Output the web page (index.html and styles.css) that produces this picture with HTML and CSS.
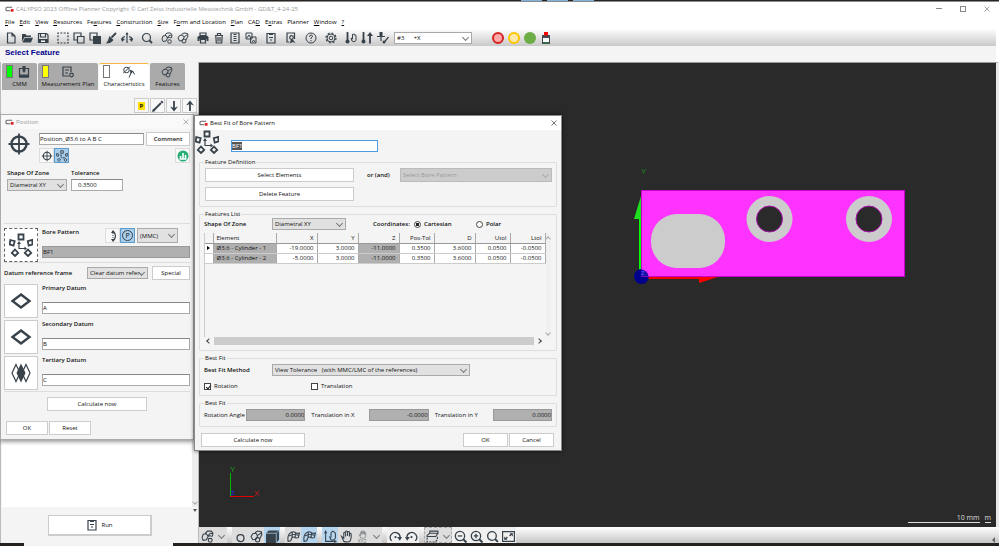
FILE: index.html
```html
<!DOCTYPE html>
<html lang="en">
<head>
    <meta charset="UTF-8">
    <meta name="viewport" content="width=device-width, initial-scale=1.0">
    <title>CALYPSO 2023 Offline Planner</title>
    <link rel="stylesheet" href="styles.css">
</head>
<body>
    <!-- Icon set -->
    <svg class="icon-defs" aria-hidden="true">
        <symbol id="i-logo" viewBox="0 0 10 6"><path d="M8 1H2.500Q1 1 1 3T2.500 5H6" fill="none" stroke="#666" stroke-width="1.200"/><path d="M6.500 3h3v3h-3z" fill="#e02020"/></symbol>
        <symbol id="i-new" viewBox="0 0 12 12"><path d="M2.500 1h4.500l3 3v7H2.500zM7 1v3h3" class="ln"/></symbol>
        <symbol id="i-open" viewBox="0 0 12 12"><path d="M1 10V2h3.500l1 1.500H10V5H3.500z" class="fl"/><path d="M3.800 5.800H12L10 10.500H1.500z" class="fl"/></symbol>
        <symbol id="i-save" viewBox="0 0 12 12"><path d="M1.500 1.500h8l1.500 1.500v7.500H1.500zM3.500 1.500v3.500h5V1.500" class="ln"/><path d="M1 7h10v4H1z" class="fl"/><path d="M4 8.500h4v1.500H4z" fill="#fff"/></symbol>
        <symbol id="i-frame" viewBox="0 0 12 12"><path d="M1 1h10v10H1z" class="ln" stroke-dasharray="2 1.330" stroke-dashoffset="1"/></symbol>
        <symbol id="i-copy" viewBox="0 0 12 12"><path d="M4 8H1V1h7v3M4.500 4.500H11V11H4.500z" class="ln"/></symbol>
        <symbol id="i-copy2" viewBox="0 0 12 12"><path d="M4 8H1V1h7v3" class="ln"/><path d="M4 4h8v8H4z" class="fl"/></symbol>
        <symbol id="i-brush" viewBox="0 0 12 12"><path d="M11 1L6.500 5.500" class="ln bold"/><path d="M4.500 4l4 4Q6 11.500 1 11.500L3 8.500z" class="fl"/></symbol>
        <symbol id="i-level" viewBox="0 0 12 12"><path d="M6 1v10M1 8Q1 5 4 4.500M11 8Q11 5 8 4.500" class="ln"/><path d="M6 0l1.500 2.500h-3zM0 6l4 1-3 3zM12 6L8 7l3 3z" class="fl"/></symbol>
        <symbol id="i-search" viewBox="0 0 12 12"><circle cx="5.500" cy="5.500" r="4" class="ln"/><path d="M8.500 8.500l2.500 2.500" class="ln bold"/></symbol>
        <symbol id="i-feat" viewBox="0 0 12 12"><path d="M1 7l1-3 3-.5 1.500 2.500L5 9 2 9.500zM4 3l2-2h3.500L11 3l-.5 3M6.500 5.500L8 3.500l2.500-.5M6.500 6q2-1.500 3.500 0" class="ln thin"/><circle cx="8.500" cy="9.500" r="1.800" class="ln thin"/></symbol>
        <symbol id="i-feat2" viewBox="0 0 12 12"><path d="M1 6l1.500-2.500 3-.5L7 5.500 5.500 8.500 2.500 9zM4.500 2.500L7 1l3.500.5L11 4 9 8M7 5l3.500-2.500" class="ln thin"/><circle cx="7" cy="9" r="2" class="ln thin"/></symbol>
        <symbol id="i-print" viewBox="0 0 12 12"><path d="M3 1h6v2.500H3z" class="ln"/><path d="M1.500 4h9l1 1v4H9.500V7h-7v2h-2V5z" class="fl"/><path d="M3.500 7.500h5v3.500h-5z" class="ln"/></symbol>
        <symbol id="i-trash" viewBox="0 0 12 12"><path d="M2 3.500h8M4.500 3V1.500h3V3M2.800 4l.5 7h5.400l.5-7M5 5v4.500M7 5v4.500" class="ln"/></symbol>
        <symbol id="i-list" viewBox="0 0 12 12"><path d="M2 1h8v10H2z" class="ln"/><path d="M4.500 2.500h3M4.500 4.500h3M4.500 6.500h3M4.500 8.500h3" class="ln"/></symbol>
        <symbol id="i-images" viewBox="0 0 12 12"><path d="M1 1h6v6H1zM5.500 5H11v6H5.500zM2 6l2-3 2 3M7 10l1.500-2 1.500 2" class="ln thin"/></symbol>
        <symbol id="i-clip" viewBox="0 0 12 12"><path d="M2 1.500h8v9.500H2zM4 5.500h4M5 8h2" class="ln"/><path d="M4 1h4v2H4z" class="fl"/></symbol>
        <symbol id="i-report" viewBox="0 0 12 12"><path d="M4 10H2V1h7.500v6" class="ln"/><circle cx="6.500" cy="5.500" r="1.800" class="ln"/><path d="M4.500 11.500l1.500-4h2l2.500 4-2.500-1.500z" class="fl"/></symbol>
        <symbol id="i-help" viewBox="0 0 12 12"><circle cx="6" cy="6" r="5" class="ln thin"/><path d="M4.500 5q0-2 1.500-2t1.500 1.300q0 .7-1.500 1.700v1M6 8v1.200" class="ln thin"/></symbol>
        <symbol id="i-gear" viewBox="0 0 12 12"><circle cx="6" cy="6" r="4" class="ln thin"/><circle cx="6" cy="6" r="5" class="ln" stroke-dasharray="2 1.900"/><circle cx="6" cy="6" r="1.800" class="ln thin"/></symbol>
        <symbol id="i-probe-hand" viewBox="0 0 12 12"><path d="M2.500 0v8" class="ln bold"/><circle cx="2.500" cy="9.500" r="2" class="fl"/><path d="M6 6l1 3q2 2 4-.5V3.500q-1-1-1 0 0-2-1.200-1.200Q7.500 1.500 7.500 3v4z" class="ln thin"/></symbol>
        <symbol id="i-probe-up" viewBox="0 0 12 12"><path d="M2.500 0v8M9 3v8.500" class="ln bold"/><circle cx="2.500" cy="9.500" r="2" class="fl"/><path d="M9 0l3 4H6z" class="fl"/></symbol>
        <symbol id="i-stylus" viewBox="0 0 12 12"><path d="M0 4.500h8M4 4v5M7 10.500L11.500 5" class="ln"/><path d="M2.500 0h3v4h-3z" class="fl"/><circle cx="7" cy="10" r="1.500" class="fl"/></symbol>
        <symbol id="i-lamp" viewBox="0 0 12 12"><path d="M2 3h8v9H2z" fill="#444b50"/><path d="M4 0h4v3.500H4z" fill="#f00"/><path d="M3 6h6v4H3z" fill="#fff"/><path d="M3 10.500h6v1H3z" fill="#2a8a4a"/></symbol>
        <symbol id="i-machine" viewBox="0 0 12 12"><path d="M1.500 2.500h9V11h-9z" class="ln"/><path d="M4.500 0h3v5L6 7 4.500 5zM1 8.500h10v3H1z" class="fl"/></symbol>
        <symbol id="i-plan" viewBox="0 0 12 12"><path d="M7 10H1V1h8v5M3 4h4M3 7h3" class="ln"/><circle cx="9.500" cy="9" r="1.800" class="ln"/></symbol>
        <symbol id="i-char" viewBox="0 0 12 12"><circle cx="3.500" cy="4" r="2.800" class="ln thin"/><path d="M0 7.500L7 .5M6 11.500l2.500-5.500M7 4.500q4 0 4.500 4" class="ln thin"/><path d="M7 4l3.500 1.500L7.500 8z" class="fl"/></symbol>
        <symbol id="i-pencil" viewBox="0 0 12 12"><path d="M2 10L9 3" class="ln bold"/><path d="M9.200 1.200l1.600 1.600" class="ln bold"/><path d="M0 12l1-3.500L3.500 11z" class="fl"/></symbol>
        <symbol id="i-down" viewBox="0 0 12 12"><path d="M6 1v8" class="ln bold"/><path d="M2 6.500l4 5 4-5-4 1.500z" class="fl"/></symbol>
        <symbol id="i-up" viewBox="0 0 12 12"><path d="M6 11V3" class="ln bold"/><path d="M2 5.500l4-5 4 5L6 4z" class="fl"/></symbol>
        <symbol id="i-target" viewBox="0 0 24 24"><circle cx="12" cy="12" r="7.500" class="ln heavy"/><path d="M12 1.500v21M1.500 12h21" class="ln bold"/></symbol>
        <symbol id="i-pattern" viewBox="0 0 24 24"><path d="M9.500 1.500h5v5h-5zM1.300 7l4.400 1.200-1.200 4.400L.6 11.400zM18.800 8.200L23.200 7l.4 4.400-3.900 1.200zM6 16.500L9.200 20 6 23 2.800 20zM19 16.500l3.200 3.500-3.200 3-3.200-3z" class="ln bold"/><path d="M10 10v5.500h6" class="ln"/><path d="M10 8l2 3H8zM18 15.500L15.500 13.500v4z" class="fl"/></symbol>
        <symbol id="i-chart" viewBox="0 0 12 12"><circle cx="6" cy="6" r="5.500" fill="#27ae74"/><path d="M2.500 9h7M3.500 8.500V6M6 8.500V3M8.500 8.500V5" stroke="#fff" stroke-width="1.600" fill="none"/></symbol>
        <symbol id="i-env" viewBox="0 0 12 12"><path d="M6 1q5 5 0 10" class="ln"/><path d="M6 0L4 3h4zM6 12L4 9h4z" class="fl"/><path d="M6 3v6" class="ln thin" stroke-dasharray="1 1"/></symbol>
        <symbol id="i-plane" viewBox="0 0 24 24"><path d="M12 5.500l8.500 6.500-8.500 6.500L3.500 12z" class="ln heavy"/></symbol>
        <symbol id="i-sym" viewBox="0 0 24 24"><path d="M7 3.500l4 8.500-4 8.500L3 12zM17 3.500l4 8.500-4 8.500-4-8.500z" class="ln"/><path d="M12 2.500l4.500 9.500-4.500 9.500L7.500 12z" class="fl"/></symbol>
        <symbol id="i-ring" viewBox="0 0 12 12"><circle cx="6" cy="7.500" r="3.200" class="ln"/></symbol>
        <symbol id="i-cube" viewBox="0 0 12 12"><path d="M0 3l2.500-2.500H12V9l-2.500 3H0z" class="fl"/><path d="M0 3h9.500v9M9.500 3L12 .5" fill="none" stroke="#a9cbe4" stroke-width=".7"/></symbol>
        <symbol id="i-surf" viewBox="0 0 12 12"><path d="M1 10.500Q0 4 4 2q2-1 4 .5 1.500 1 3.500.3L10.500 7Q8 8 6.500 6.500 4.500 6 3.500 10zM2 5.500q4-2.500 9-.5M5 2l-.5 5M8 2.500L7.500 7" class="ln thin"/></symbol>
        <symbol id="i-axhand" viewBox="0 0 12 12"><path d="M1.500 2v8.500H10M5 6l1.500 3q3 1 4-1.500V3L9.500 2 8 1 6.500 2.500V7" class="ln thin"/><path d="M1.500 0L3 3H0zM12 10.500L9.500 9v3z" class="fl"/></symbol>
        <symbol id="i-hand" viewBox="0 0 12 12"><path d="M1.500 6l2 4.500q4 1.500 6-.5l.8-3V3.500Q9.500 2.500 8.800 3.500V6 2Q8 .8 7 2v3.500V1.500Q6 .4 5.200 1.500V6 2.500Q4.200 1.500 3.500 2.500v5z" class="ln thin"/></symbol>
        <symbol id="i-rotr" viewBox="0 0 12 12"><path d="M2.500 10A4.500 4.500 0 1 1 10 8" class="ln"/><path d="M7.500 6.500H12L10 10z" class="fl"/><circle cx="6" cy="6.500" r="1" class="fl"/></symbol>
        <symbol id="i-rotl" viewBox="0 0 12 12"><path d="M9.500 10A4.500 4.500 0 1 0 2 8" class="ln"/><path d="M4.500 6.500H0L2 10z" class="fl"/><circle cx="6" cy="6.500" r="1" class="fl"/></symbol>
        <symbol id="i-section" viewBox="0 0 12 12"><path d="M1 5l2.500-2H11L9 6H1zM3.500 3V1H11v2" class="ln thin"/><path d="M1 7v4h7.500l2-2V6" class="ln thin" stroke-dasharray="2 1"/></symbol>
        <symbol id="i-zout" viewBox="0 0 12 12"><circle cx="5.500" cy="5.500" r="4.300" class="ln"/><path d="M8.500 8.500l3 3" class="ln bold"/><path d="M3.500 5.500h4" class="ln"/></symbol>
        <symbol id="i-zin" viewBox="0 0 12 12"><circle cx="5.500" cy="5.500" r="4.300" class="ln"/><path d="M8.500 8.500l3 3" class="ln bold"/><path d="M3.500 5.500h4M5.500 3.500v4" class="ln"/></symbol>
        <symbol id="i-fit" viewBox="0 0 12 12"><path d="M.5 1.500h11v9H.5zM3 8.500L5 6.500M9 3.500L7 5.500" class="ln"/><path d="M2 6l3 3H2zM10 6L7 3h3z" class="fl"/></symbol>
        <symbol id="i-x" viewBox="0 0 12 12"><path d="M1 1l10 10M11 1L1 11" fill="none" stroke="currentColor" stroke-width="1.500"/></symbol>
    </svg>

    <div class="desktop-edge"><span></span><span></span><span></span></div>

    <header>
        <div class="app-title">
            <svg class="logo"><use href="#i-logo"/></svg>
            <h1>CALYPSO 2023 Offline Planner Copyright © Carl Zeiss Industrielle Messtechnik GmbH - GD&amp;T_4-24-25</h1>
            <div class="window-controls">
                <button type="button" aria-label="Minimize"><span class="min"></span></button>
                <button type="button" aria-label="Maximize"><span class="max"></span></button>
                <button type="button" aria-label="Close"><svg><use href="#i-x"/></svg></button>
            </div>
        </div>

        <nav class="menu">
            <a href="#"><u>F</u>ile</a>
            <a href="#"><u>E</u>dit</a>
            <a href="#"><u>V</u>iew</a>
            <a href="#"><u>R</u>esources</a>
            <a href="#">Fe<u>a</u>tures</a>
            <a href="#"><u>C</u>onstruction</a>
            <a href="#"><u>S</u>ize</a>
            <a href="#">F<u>o</u>rm and Location</a>
            <a href="#"><u>P</u>lan</a>
            <a href="#">CA<u>D</u></a>
            <a href="#">E<u>x</u>tras</a>
            <a href="#">Planner</a>
            <a href="#"><u>W</u>indow</a>
            <a href="#"><u>?</u></a>
        </nav>

        <div class="toolbar">
            <div class="tools">
                <button type="button" aria-label="New"><svg><use href="#i-new"/></svg></button>
                <button type="button" aria-label="Open"><svg><use href="#i-open"/></svg></button>
                <button type="button" aria-label="Save"><svg><use href="#i-save"/></svg></button>
            </div>
            <div class="tools">
                <button type="button" aria-label="Select"><svg><use href="#i-frame"/></svg></button>
                <button type="button" aria-label="Copy"><svg><use href="#i-copy"/></svg></button>
                <button type="button" aria-label="Paste"><svg><use href="#i-copy2"/></svg></button>
                <button type="button" aria-label="Format"><svg><use href="#i-brush"/></svg></button>
                <button type="button" aria-label="Alignment"><svg><use href="#i-level"/></svg></button>
            </div>
            <div class="tools">
                <button type="button" aria-label="Search"><svg><use href="#i-search"/></svg></button>
            </div>
            <div class="tools">
                <button type="button" aria-label="Feature"><svg><use href="#i-feat"/></svg></button>
                <button type="button" aria-label="Feature edit"><svg><use href="#i-feat2"/></svg></button>
            </div>
            <div class="tools">
                <button type="button" aria-label="Print"><svg><use href="#i-print"/></svg></button>
                <button type="button" aria-label="Delete"><svg><use href="#i-trash"/></svg></button>
                <button type="button" aria-label="List"><svg><use href="#i-list"/></svg></button>
                <button type="button" aria-label="Plots"><svg><use href="#i-images"/></svg></button>
            </div>
            <div class="tools">
                <button type="button" aria-label="Protocol"><svg><use href="#i-clip"/></svg></button>
            </div>
            <div class="tools">
                <button type="button" aria-label="Report"><svg><use href="#i-report"/></svg></button>
            </div>
            <div class="tools">
                <button type="button" aria-label="Help"><svg><use href="#i-help"/></svg></button>
            </div>
            <div class="tools">
                <button type="button" aria-label="Settings"><svg><use href="#i-gear"/></svg></button>
            </div>
            <div class="tools">
                <button type="button" aria-label="Manual probe"><svg><use href="#i-probe-hand"/></svg></button>
                <button type="button" aria-label="Raise probe"><svg><use href="#i-probe-up"/></svg></button>
                <button type="button" aria-label="Stylus"><svg><use href="#i-stylus"/></svg></button>
            </div>
            <span class="select-box probe-select">
                <select aria-label="Probe"><option>#3 &nbsp; &nbsp; &nbsp;+X</option></select>
            </span>
            <div class="tools lights">
                <button type="button" class="light red" aria-label="Stop"></button>
                <button type="button" class="light yellow" aria-label="Pause"></button>
                <button type="button" class="light green" aria-label="Go"></button>
                <button type="button" aria-label="Status lamp"><svg><use href="#i-lamp"/></svg></button>
            </div>
        </div>

        <h2 class="prompt">Select Feature</h2>
    </header>

    <main>
        <section class="sidebar">
            <div class="tabs">
                <button type="button"><span class="tab-icons"><i class="flag on"></i><svg><use href="#i-machine"/></svg></span>CMM</button>
                <button type="button"><span class="tab-icons plan"><i class="flag wait"></i><svg><use href="#i-plan"/></svg></span>Measurement Plan</button>
                <button type="button" class="active"><span class="tab-icons"><i class="flag"></i><svg><use href="#i-char"/></svg></span>Characteristics</button>
                <button type="button"><span class="tab-icons single"><svg><use href="#i-feat2"/></svg></span>Features</button>
            </div>
            <div class="list-tools">
                <button type="button"><b>P</b></button>
                <button type="button" aria-label="Edit"><svg><use href="#i-pencil"/></svg></button>
                <button type="button" aria-label="Move down"><svg><use href="#i-down"/></svg></button>
                <button type="button" aria-label="Move up"><svg><use href="#i-up"/></svg></button>
            </div>
            <div class="char-list"><div class="list-scroll"><i class="arrow down"></i></div></div>
            <div class="run-bar">
                <button type="button" class="run"><svg><use href="#i-clip"/></svg>Run</button>
                <span class="more"></span>
            </div>
        </section>

        <section class="workspace">
            <div class="viewport">
                <svg viewBox="0 1 797 464" preserveAspectRatio="xMinYMin meet">
                    <path d="M440 151h3v60h-3z" fill="#0f0"/>
                    <path d="M442 134l-7 23h8z" fill="#1fe01f"/>
                    <path d="M448 214h60v3h-60z" fill="#e00"/>
                    <path d="M500 214h22l-22 7z" fill="#f00"/>
                    <circle cx="442.500" cy="214.500" r="7.500" fill="#00008c"/>
                    <rect x="442.500" y="128.500" width="263" height="86" fill="#ff33ff" stroke="#c800c8"/>
                    <path d="M442 207.500a7.500 7.500 0 0 1 7.500 7h-7.500z" fill="#1c10a8"/>
                    <rect x="452" y="152" width="74" height="54" rx="26" fill="#ccc"/>
                    <g fill="#2a2a2a" stroke="#b010b0">
                        <circle cx="570.500" cy="157" r="23" fill="#ccc" stroke="none"/>
                        <circle cx="570.500" cy="157" r="13"/>
                        <circle cx="670" cy="157" r="23" fill="#ccc" stroke="none"/>
                        <circle cx="670" cy="157" r="13"/>
                    </g>
                    <text x="442" y="112" fill="#1c8a1c">Y</text>
                    <text x="442" y="213" class="tiny" fill="#55f">Z</text>

                    <path d="M31.500 411v23" stroke="#00b400"/>
                    <path d="M31 434.500h24" stroke="#e00000"/>
                    <text x="31" y="410" fill="#1a9a1a">Y</text>
                    <text x="55" y="434" fill="#c01818">X</text>
                    <text x="32" y="433" class="tiny" fill="#22f">Z</text>
                </svg>
                <div class="scale"><span>10 mm</span><span>m</span></div>
            </div>

            <div class="view-tools">
                <div class="group">
                    <button type="button" aria-label="Features"><svg><use href="#i-feat"/></svg></button>
                    <button type="button" class="drop" aria-label="More features"></button>
                </div>
                <div class="group">
                    <button type="button" aria-label="Points"><svg><use href="#i-ring"/></svg></button>
                    <button type="button" aria-label="Solids"><svg><use href="#i-feat2"/></svg></button>
                    <button type="button" class="on" aria-label="Shaded"><svg><use href="#i-cube"/></svg></button>
                </div>
                <div class="group">
                    <button type="button" aria-label="Surface"><svg><use href="#i-surf"/></svg></button>
                    <button type="button" class="on" aria-label="Patch"><svg><use href="#i-surf"/></svg></button>
                </div>
                <div class="group">
                    <button type="button" class="on" aria-label="Move axes"><svg><use href="#i-axhand"/></svg></button>
                    <button type="button" aria-label="Pan"><svg><use href="#i-hand"/></svg></button>
                    <button type="button" class="xyz"><svg><use href="#i-hand"/></svg>XYZ</button>
                    <button type="button" class="drop" aria-label="More views"></button>
                </div>
                <div class="group light-group">
                    <button type="button" aria-label="Rotate right"><svg><use href="#i-rotr"/></svg></button>
                    <button type="button" aria-label="Rotate left"><svg><use href="#i-rotl"/></svg></button>
                </div>
                <div class="group dim">
                    <button type="button" aria-label="Section"><svg><use href="#i-section"/></svg></button>
                    <button type="button" class="drop" aria-label="More sections"></button>
                </div>
                <div class="group light-group last">
                    <button type="button" aria-label="Zoom out"><svg><use href="#i-zout"/></svg></button>
                    <button type="button" aria-label="Zoom in"><svg><use href="#i-zin"/></svg></button>
                    <button type="button" aria-label="Zoom"><svg><use href="#i-search"/></svg></button>
                    <button type="button" aria-label="Fit"><svg><use href="#i-fit"/></svg></button>
                </div>
                <span class="collapse"></span>
            </div>
        </section>
    </main>

    <div class="desktop-bottom"><span></span></div>

    <!-- Position window -->
    <form class="window position">
        <div class="window-title">
            <svg class="logo"><use href="#i-logo"/></svg>
            <h3>Position</h3>
            <button type="button" class="close" aria-label="Close"><svg><use href="#i-x"/></svg></button>
        </div>
        <div class="pos-head">
            <svg class="big-icon"><use href="#i-target"/></svg>
            <div class="pos-fields">
                <div class="row">
                    <input type="text" class="grow" aria-label="Name" value="Position_Ø3.6 to A B C">
                    <button type="button" class="btn comment">Comment</button>
                </div>
                <div class="row toggles">
                    <button type="button" class="toggle" aria-label="Single"><svg><use href="#i-target"/></svg></button>
                    <button type="button" class="toggle on" aria-label="Pattern"><svg><use href="#i-pattern"/></svg></button>
                    <button type="button" class="toggle end" aria-label="Chart"><svg><use href="#i-chart"/></svg></button>
                </div>
            </div>
        </div>
        <div class="zone">
            <label for="zone">Shape Of Zone</label>
            <label for="tol">Tolerance</label>
            <span class="select-box"><select id="zone"><option>Diametral XY</option></select></span>
            <input type="text" id="tol" value="0.3500">
        </div>
        <div class="bore">
            <button type="button" class="slot dashed" aria-label="Bore pattern"><svg><use href="#i-pattern"/></svg></button>
            <div class="slot-fields">
                <div class="row">
                    <label for="bore" class="grow">Bore Pattern</label>
                    <button type="button" class="toggle" aria-label="Envelope"><svg><use href="#i-env"/></svg></button>
                    <button type="button" class="toggle on projected"><span>P</span></button>
                    <span class="select-box mmc"><select aria-label="Modifier"><option>(MMC)</option></select></span>
                </div>
                <input type="text" id="bore" class="filled" value="BF1" readonly>
            </div>
        </div>
        <div class="row frame-row">
            <label for="frame" class="grow">Datum reference frame</label>
            <span class="select-box frame"><select id="frame"><option>Clear datum refer-</option></select></span>
            <button type="button" class="btn special">Special</button>
        </div>
        <div class="datums">
            <div class="datum">
                <button type="button" class="slot" aria-label="Primary feature"><svg><use href="#i-plane"/></svg></button>
                <div class="slot-fields"><label for="d1">Primary Datum</label><input type="text" id="d1" value="A"></div>
            </div>
            <div class="datum">
                <button type="button" class="slot" aria-label="Secondary feature"><svg><use href="#i-plane"/></svg></button>
                <div class="slot-fields"><label for="d2">Secondary Datum</label><input type="text" id="d2" value="B"></div>
            </div>
            <div class="datum">
                <button type="button" class="slot" aria-label="Tertiary feature"><svg><use href="#i-sym"/></svg></button>
                <div class="slot-fields"><label for="d3">Tertiary Datum</label><input type="text" id="d3" value="C"></div>
            </div>
        </div>
        <div class="calc"><button type="button" class="btn">Calculate now</button></div>
        <div class="pos-foot">
            <button type="button" class="btn">OK</button>
            <button type="button" class="btn">Reset</button>
        </div>
    </form>

    <!-- Best fit window -->
    <form class="window bestfit">
        <div class="window-title">
            <svg class="logo"><use href="#i-logo"/></svg>
            <h3>Best Fit of Bore Pattern</h3>
            <button type="button" class="close" aria-label="Close"><svg><use href="#i-x"/></svg></button>
        </div>
        <div class="bf-head">
            <svg class="big-icon"><use href="#i-pattern"/></svg>
            <div class="bf-name"><input type="text" id="bfname" aria-label="Name" value="BF1"></div>
        </div>

        <fieldset class="definition">
            <legend>Feature Definition</legend>
            <div class="def-buttons">
                <button type="button" class="btn">Select Elements</button>
                <button type="button" class="btn">Delete Feature</button>
            </div>
            <label for="pattern">or (and)</label>
            <span class="select-box disabled"><select id="pattern" disabled><option>Select Bore Pattern</option></select></span>
        </fieldset>

        <fieldset class="features">
            <legend>Features List</legend>
            <div class="list-head">
                <label for="bfzone">Shape Of Zone</label>
                <span class="select-box"><select id="bfzone"><option>Diametral XY</option></select></span>
                <span class="coords">Coordinates:</span>
                <label class="choice"><input type="radio" name="coord" checked>Cartesian</label>
                <label class="choice"><input type="radio" name="coord">Polar</label>
            </div>
            <div class="grid-box">
                <div class="grid-view">
                    <table>
                        <thead>
                            <tr><th class="mark"></th><th class="name">Element</th><th>X</th><th>Y</th><th>Z</th><th class="narrow">Pos-Tol</th><th>D</th><th class="narrow">Utol</th><th class="narrow">Ltol</th></tr>
                        </thead>
                        <tbody>
                            <tr><td class="mark"><i></i></td><td class="name fixed">Ø3.6 - Cylinder - 1</td><td>-19.0000</td><td>3.0000</td><td class="fixed">-11.0000</td><td>0.3500</td><td>3.6000</td><td>0.0500</td><td>-0.0500</td></tr>
                            <tr><td class="mark"></td><td class="name fixed">Ø3.6 - Cylinder - 2</td><td>-5.0000</td><td>3.0000</td><td class="fixed">-11.0000</td><td>0.3500</td><td>3.6000</td><td>0.0500</td><td>-0.0500</td></tr>
                        </tbody>
                    </table>
                </div>
                <div class="vscroll"><i class="arrow up"></i><i class="arrow down"></i></div>
            </div>
            <div class="hscroll"><i class="arrow left"></i><span class="thumb"></span><i class="arrow right"></i></div>
        </fieldset>

        <fieldset class="method">
            <legend>Best Fit</legend>
            <div class="method-row">
                <label for="method">Best Fit Method</label>
                <span class="select-box"><select id="method"><option>View Tolerance &nbsp; (with MMC/LMC of the references)</option></select></span>
            </div>
            <div class="checks">
                <label><input type="checkbox" checked>Rotation</label>
                <label><input type="checkbox">Translation</label>
            </div>
        </fieldset>

        <fieldset class="result">
            <legend>Best Fit</legend>
            <label for="rot">Rotation Angle</label>
            <input type="text" id="rot" class="filled" value="0.0000" readonly>
            <label for="tx">Translation in X</label>
            <input type="text" id="tx" class="filled" value="-0.0000" readonly>
            <label for="ty">Translation in Y</label>
            <input type="text" id="ty" class="filled" value="0.0000" readonly>
        </fieldset>

        <div class="bf-foot">
            <button type="button" class="btn wide">Calculate now</button>
            <button type="button" class="btn">OK</button>
            <button type="button" class="btn">Cancel</button>
        </div>
    </form>

    <script>
        // Name is preselected when the window opens
        const nameField = document.getElementById('bfname');
        nameField.focus();
        nameField.select();
    </script>
</body>
</html>
```

FILE: styles.css
```css
* {
    margin: 0;
    padding: 0;
    box-sizing: border-box;
}

body {
    font-family: 'Open Sans', 'Noto Sans', sans-serif;
    font-size: 6px;
    line-height: 8px;
    color: #111;
    background: #f4f4f4;
    min-height: 100vh;
    display: flex;
    flex-direction: column;
    position: relative;
    overflow: hidden;
}

button,
input,
select {
    font: inherit;
    color: inherit;
}

button {
    border: none;
    background: none;
    display: flex;
    align-items: center;
    justify-content: center;
}

svg {
    display: block;
    width: 12px;
    height: 12px;
    flex: none;
}

.icon-defs {
    position: absolute;
    width: 0;
    height: 0;
}

.ln {
    fill: none;
    stroke: #38424b;
    stroke-width: 1.2px;
}

.ln.thin {
    stroke-width: 1px;
}

.ln.bold {
    stroke-width: 1.8px;
}

.ln.heavy {
    stroke-width: 2.4px;
}

.fl {
    fill: #38424b;
}

.row {
    display: flex;
}

.grow {
    flex: 1;
    min-width: 0;
}

/* Desktop showing above and below the application */
.desktop-edge {
    height: 2px;
    background: #2a2521;
    display: flex;
    justify-content: center;
    gap: 5px;
    padding-left: 115px;
    border-bottom: 1px solid #8a8a8a;
}

.desktop-edge span {
    width: 21px;
    background: #7fb2dd;
}

.desktop-bottom {
    height: 3px;
    background: #24211e;
    padding-left: 24px;
}

.desktop-bottom span {
    display: block;
    width: 149px;
    height: 3px;
    background: #f4f4f4;
}

/* Header */
header {
    background: #fff;
}

.app-title {
    height: 13px;
    padding-left: 5px;
    display: flex;
    align-items: center;
    gap: 2px;
}

.logo {
    width: 9px;
    height: 6px;
}

.app-title h1 {
    font-size: 6px;
    font-weight: 400;
    color: #999;
}

.window-controls {
    margin-left: auto;
    display: flex;
    color: #888;
}

.window-controls button {
    width: 24px;
    height: 13px;
}

.window-controls svg {
    width: 6px;
    height: 6px;
}

.window-controls .min {
    width: 6px;
    height: 1px;
    background: #888;
}

.window-controls .max {
    width: 6px;
    height: 6px;
    border: 1px solid #888;
}

.menu {
    height: 14px;
    padding-left: 5px;
    display: flex;
    align-items: center;
    gap: 5px;
}

.menu a {
    color: #000;
    text-decoration: none;
}

.toolbar {
    height: 17px;
    margin-right: 3px;
    padding-left: 5px;
    background: linear-gradient(#fdfdfd, #c9c9c9);
    display: flex;
    align-items: center;
    gap: 8px;
}

.tools {
    display: flex;
    gap: 4px;
}

.light {
    width: 12px;
    height: 12px;
    border-radius: 50%;
}

.light.red {
    background: #ffa8a8;
    border: 2px solid #d62323;
}

.light.yellow {
    background: #ffe9a8;
    border: 2px solid #ffc400;
}

.light.green {
    background: #6cae45;
}

.lights {
    margin-left: 12px;
}

.prompt {
    height: 16px;
    line-height: 13px;
    margin-right: 3px;
    padding-left: 5px;
    font-family: 'Liberation Sans', Arial, sans-serif;
    font-size: 8px;
    color: #00008b;
    background: #f4f4f4;
}

/* Drop-downs */
.select-box {
    position: relative;
    display: block;
    height: 12px;
}

.select-box select {
    appearance: none;
    display: block;
    width: 100%;
    height: 100%;
    padding: 0 4px 0 2px;
    border: 1px solid #aaa;
    border-radius: 0;
    background: #e1e1e1;
    opacity: 1;
}

.select-box::after,
.drop::after {
    content: '';
    width: 4px;
    height: 4px;
    border: solid #777;
    border-width: 0 1px 1px 0;
    transform: rotate(45deg);
}

.select-box::after {
    position: absolute;
    right: 4px;
    top: 3px;
}

.select-box.disabled select {
    background: #ccc;
    color: #999;
    border-color: #bbb;
}

.select-box.disabled::after {
    border-color: #aaa;
}

.probe-select {
    width: 78px;
    margin-left: -3px;
}

.probe-select select {
    background: #fff;
}

/* Shared controls */
.btn {
    height: 14px;
    background: #fff;
    border: 1px solid #ccc;
}

input[type="text"] {
    display: block;
    width: 100%;
    height: 12px;
    border: 1px solid #aaa;
    border-top-color: #888;
    background: #fff;
}

input[type="text"].filled {
    background: #b0b0b0;
    border-color: #999;
}

label {
    font-weight: 600;
}

.toggle {
    width: 15px;
    height: 15px;
    border: 1px solid #ddd;
    background: #f8f8f8;
}

.toggle.on {
    background: #a8cdeb;
    border-color: #5d9bcb;
}

.arrow {
    width: 4px;
    height: 4px;
    border: solid #444;
    border-width: 1px 0 0 1px;
}

.arrow.up {
    border-color: #aaa;
    transform: rotate(45deg);
}

.arrow.down {
    border-color: #aaa;
    transform: rotate(225deg);
}

.arrow.left {
    transform: rotate(-45deg);
}

.arrow.right {
    transform: rotate(135deg);
}

/* Main area */
main {
    flex: 1;
    display: flex;
}

.sidebar {
    width: 199px;
    display: flex;
    flex-direction: column;
    border-left: 1px solid #bbb;
    border-right: 1px solid #bbb;
}

.tabs {
    display: flex;
    gap: 1px;
    padding: 1px 0 0 1px;
}

.tabs button {
    height: 27px;
    flex-direction: column;
    justify-content: flex-start;
    gap: 2px;
    background: #aaa;
    border-radius: 2px 2px 0 0;
    width: 35px;
}

.tabs button:nth-child(2) {
    width: 60px;
}

.tabs button:nth-child(3) {
    width: 50px;
}

.tabs .active {
    background: #fff;
    border-top: 1px solid #f5b545;
}

.tab-icons {
    align-self: stretch;
    display: flex;
    align-items: center;
    gap: 5px;
    height: 15px;
    padding: 2px 0 0 4px;
}

.tab-icons.plan,
.active .tab-icons {
    gap: 13px;
}

.active .tab-icons {
    height: 14px;
    padding-top: 1px;
}

.tab-icons.single {
    padding-left: 11px;
}

.flag {
    width: 7px;
    height: 13px;
    border: 1px solid #777;
    background: #fff;
}

.flag.on {
    background: #0f0;
}

.flag.wait {
    background: #ff0;
}

.list-tools {
    display: flex;
    justify-content: flex-end;
    gap: 1px;
    padding: 8px 1px 0 0;
}

.list-tools button {
    width: 15px;
    height: 15px;
    background: #f8f8f8;
    border: 1px solid #ccc;
}

.list-tools b {
    width: 7px;
    height: 8px;
    background: #ffe000;
}

.char-list {
    flex: 1;
    margin-left: 1px;
    background: #fff;
    display: flex;
    justify-content: flex-end;
}

.list-scroll {
    width: 6px;
    padding: 0 1px 3px;
    background: #eee;
    display: flex;
    align-items: flex-end;
}

.run-bar {
    height: 36px;
    display: flex;
    align-items: center;
    justify-content: space-between;
    padding: 0 1px 0 47px;
}

.run {
    width: 104px;
    height: 21px;
    gap: 3px;
    background: #fff;
    border: 1px solid #ccc;
    border-width: 1px 2px 2px 1px;
}

.more {
    align-self: flex-start;
    margin-top: 2px;
    border: solid transparent;
    border-width: 3px 2px 0;
    border-top-color: #555;
}

.workspace {
    flex: 1;
    min-width: 0;
    display: flex;
    flex-direction: column;
}

.viewport {
    flex: 1;
    background: #2a2a2a;
    border-top: 1px solid #999;
    border-right: 3px solid #e8e8e8;
    position: relative;
}

.viewport svg {
    width: 100%;
    height: auto;
    position: absolute;
    font-family: 'Liberation Sans', Arial, sans-serif;
    font-size: 8px;
}

.viewport .tiny {
    font-size: 6px;
}

.scale {
    position: absolute;
    right: 5px;
    bottom: 4px;
    display: flex;
    gap: 5px;
    color: #ddd;
    font-size: 7px;
}

.scale span {
    border-bottom: 1px solid #ddd;
}

.scale span:first-child {
    width: 72px;
    text-align: right;
}

.view-tools {
    height: 16px;
    display: flex;
    gap: 5px;
    background: linear-gradient(#fff, #c6c6c6);
}

.group {
    display: flex;
    background: #ddd;
}

.view-tools button {
    width: 16px;
    height: 16px;
    padding-top: 2px;
}

.view-tools svg {
    width: 13px;
    height: 13px;
}

.view-tools .on {
    background: #b5d5ee;
}

.view-tools .drop {
    width: 12px;
    padding: 0;
}

.view-tools .light-group {
    background: #f0f0f0;
}

.dim {
    outline: 1px dashed #aaa;
    outline-offset: -1px;
}

.view-tools .xyz {
    flex-direction: column;
    font-size: 5px;
    line-height: 4px;
    color: #777;
}

.view-tools .xyz svg {
    width: 9px;
    height: 9px;
    opacity: 0.6;
}

.last {
    margin-left: -5px;
}

.collapse {
    margin: 10px 4px 0 auto;
    border: solid transparent;
    border-width: 3px 3px 3px 0;
    border-right-color: #666;
    height: 6px;
}

/* Floating windows */
.window {
    position: absolute;
    background: #f4f4f4;
}

.window-title {
    height: 14px;
    display: flex;
    align-items: center;
    gap: 2px;
    padding: 0 4px;
    background: #fff;
}

.window-title h3 {
    font-size: 6px;
    font-weight: 400;
}

.close {
    margin-left: auto;
    height: 8px;
    color: #444;
}

.close svg {
    width: 6px;
    height: 6px;
}

.big-icon {
    width: 24px;
    height: 24px;
}

/* Position window */
.position {
    left: 0;
    top: 114px;
    width: 194px;
    padding-bottom: 4px;
    border: 1px solid #aaa;
    box-shadow: 0 2px 4px rgba(0, 0, 0, 0.4);
}

.position .window-title {
    background: #f9f9f9;
    color: #999;
}

.position .close {
    color: #999;
}

.pos-head {
    display: flex;
    gap: 8px;
    padding: 3px 3px 0 6px;
}

.pos-fields {
    flex: 1;
}

.pos-fields .row {
    gap: 2px;
    align-items: center;
}

.pos-fields .toggles {
    gap: 0;
    margin-top: 2px;
}

.comment {
    width: 44px;
    font-weight: 600;
}

.toggle.end {
    margin-left: auto;
}

.zone {
    display: grid;
    grid-template-columns: 60px 52px;
    column-gap: 4px;
    row-gap: 2px;
    padding: 6px 0 0 6px;
    height: 60px;
    align-content: start;
}

#tol {
    padding-left: 6px;
}

.bore {
    display: flex;
    gap: 4px;
    margin: 0 3px;
    padding-top: 4px;
    border-top: 1px solid #ddd;
}

.slot {
    width: 34px;
    height: 34px;
    background: #fff;
    border: 1px solid #ccc;
}

.slot svg {
    width: 24px;
    height: 24px;
}

.slot.dashed {
    border: 1px dashed #666;
}

.slot-fields {
    flex: 1;
    display: flex;
    flex-direction: column;
    justify-content: space-between;
    padding-bottom: 4px;
}

.projected span {
    width: 11px;
    height: 11px;
    border: 1px solid #38424b;
    border-radius: 50%;
    line-height: 9px;
    font-size: 7px;
}

.mmc {
    width: 41px;
    height: 15px;
    margin: 0 12px 0 2px;
}

.mmc::after {
    top: 4px;
}

.frame-row {
    gap: 4px;
    align-items: center;
    margin: 0 3px;
    padding: 3px 0 4px;
    border-top: 1px solid #ddd;
}

.frame {
    width: 61px;
}

.special {
    width: 38px;
}

.datums {
    display: flex;
    flex-direction: column;
    gap: 2px;
    margin: 0 3px;
    padding-bottom: 1px;
    border-bottom: 1px solid #ddd;
}

.datum {
    display: flex;
    gap: 4px;
}

.calc .btn {
    width: 100px;
    margin: 5px auto 0;
}

.pos-foot {
    display: flex;
    gap: 1px;
    padding: 10px 0 0 5px;
}

.pos-foot .btn {
    width: 42px;
}

/* Best fit window */
.bestfit {
    left: 194px;
    top: 115px;
    width: 368px;
    border: 1px solid #888;
    box-shadow: 0 0 4px rgba(0, 0, 0, 0.6);
    padding-bottom: 3px;
}

.bf-head {
    display: flex;
    gap: 12px;
    height: 28px;
}

.bf-name {
    width: 147px;
    padding-top: 10px;
}

.bf-name input[type="text"] {
    outline: none;
    border-color: #4a9be0;
}

.bf-name input::selection {
    background: #555;
    color: #fff;
}

fieldset {
    margin: 0 4px;
    border: 1px solid #ddd;
    border-radius: 1px;
    padding: 2px 4px 5px;
    min-width: 0;
}

legend {
    padding: 0 1px;
}

.definition {
    display: flex;
    align-items: flex-start;
}

.def-buttons {
    width: 149px;
    display: flex;
    flex-direction: column;
    gap: 5px;
    margin-left: 1px;
}

.definition label {
    width: 46px;
    padding: 3px 0 0 13px;
}

.definition .select-box {
    flex: 1;
    height: 14px;
}

.definition .select-box::after {
    top: 4px;
}

.features {
    margin-top: 3px;
    padding-top: 0;
}

.list-head {
    display: flex;
    align-items: center;
}

.list-head > label:first-child,
.method-row label {
    width: 68px;
}

.list-head .select-box {
    width: 74px;
}

.coords {
    width: 41px;
    margin-left: 27px;
    font-weight: 600;
}

.choice {
    display: flex;
    align-items: center;
    gap: 3px;
    width: 62px;
}

input[type="radio"],
input[type="checkbox"] {
    appearance: none;
    width: 7px;
    height: 7px;
    border: 1px solid #444;
    background: #fff;
}

input[type="radio"] {
    border-radius: 50%;
}

input[type="radio"]:checked {
    background: radial-gradient(#222 40%, #fff 50%);
}

input[type="checkbox"]:checked::after {
    content: '';
    display: block;
    width: 2px;
    height: 4px;
    margin-left: 2px;
    border: solid #222;
    border-width: 0 1px 1px 0;
    transform: rotate(40deg);
}

.grid-box {
    display: flex;
    height: 104px;
    margin: 3px 1px 0 0;
    border-left: 1px solid #ccc;
}

.grid-view {
    flex: 1;
}

table {
    width: 100%;
    table-layout: fixed;
    border-collapse: collapse;
    background: #fff;
}

th,
td {
    height: 10px;
    padding: 0 3px;
    text-align: right;
    font-weight: 500;
    border-right: 1px solid #aaa;
    border-bottom: 1px solid #ccc;
    white-space: nowrap;
}

th {
    width: 41px;
    background: #f4f4f4;
    border-bottom-color: #999;
}

th.mark {
    width: 8px;
}

th.name {
    width: 63px;
}

th.narrow {
    width: 35px;
}

td.mark {
    padding: 0 2px;
}

td.mark i {
    display: block;
    border: solid transparent;
    border-width: 2px 0 2px 3px;
    border-left-color: #000;
}

.name {
    text-align: left;
}

.fixed {
    background: #b0b0b0;
}

.vscroll {
    width: 8px;
    display: flex;
    flex-direction: column;
    justify-content: space-between;
    align-items: center;
    padding: 4px 0 2px;
    background: #f0f0f0;
}

.hscroll {
    display: flex;
    align-items: center;
    gap: 3px;
    padding: 0 11px 0 3px;
}

.thumb {
    flex: 1;
    height: 8px;
    background: #ccc;
}

.method {
    margin-top: 3px;
}

.method-row {
    display: flex;
    align-items: center;
}

.method-row .select-box {
    width: 198px;
}

.checks {
    display: flex;
    padding-top: 6px;
}

.checks label {
    display: flex;
    align-items: center;
    gap: 3px;
    width: 107px;
    font-weight: 500;
}

.result {
    display: flex;
    align-items: center;
    margin-top: 3px;
}

.result label {
    width: 64px;
    padding-left: 6px;
    font-weight: 500;
}

.result label:first-of-type {
    width: 42px;
    padding-left: 0;
    white-space: nowrap;
}

.result input[type="text"] {
    flex: 1;
    min-width: 0;
    text-align: right;
}

.bf-foot {
    display: flex;
    gap: 1px;
    padding: 6px 7px 0 6px;
}

.bf-foot .btn {
    width: 45px;
}

.bf-foot .wide {
    width: 104px;
    margin-right: auto;
}
```
